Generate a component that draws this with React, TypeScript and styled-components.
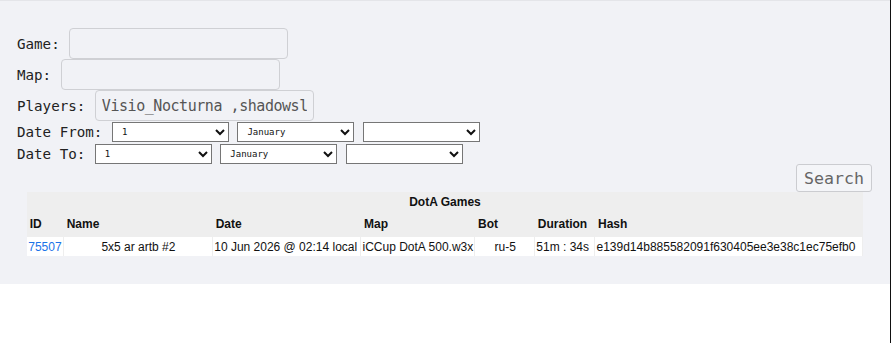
import React from "react";
import styled, { createGlobalStyle } from "styled-components";

const Global = createGlobalStyle`
  html, body { margin: 0; padding: 0; background: #ffffff; }
  * { box-sizing: border-box; }
`;

const Page = styled.div`
  width: 891px;
  min-height: 100vh;
  border-right: 1px solid #111;
`;

const Panel = styled.section`
  background: #f1f2f6;
  border-top: 1px solid #e4e5e9;
  padding: 27px 0 28px;
`;

const Form = styled.form`
  display: flex;
  flex-direction: column;
  padding-left: 17px;
`;

const Row = styled.div<{ $h: number }>`
  display: flex;
  align-items: center;
  gap: 9.5px;
  height: ${(p) => p.$h}px;
`;

const Label = styled.label`
  font-family: "DejaVu Sans Mono", monospace;
  font-size: 14.2px;
  color: #222;
  white-space: pre;
`;

const TextInput = styled.input`
  width: 219px;
  height: 31px;
  border: 1px solid #cfd0d4;
  border-radius: 4px;
  background: transparent;
  padding: 0 6px;
  font-family: "DejaVu Sans Mono", monospace;
  font-size: 15px;
  letter-spacing: -0.45px;
  color: #555;
  outline: none;
`;

const Selects = styled.div`
  display: flex;
  gap: 8.5px;
`;

const Select = styled.select`
  width: 117px;
  height: 20px;
  background-color: #fff;
  font-family: "DejaVu Sans Mono", monospace;
  font-size: 9px;
  color: #111;
  padding-left: 5px;
`;

const SearchRow = styled.div`
  display: flex;
  justify-content: flex-end;
  padding-right: 18px;
  margin-top: -1px;
`;

const SearchButton = styled.button`
  width: 76px;
  height: 28px;
  border: 1px solid #cbccd0;
  border-radius: 3px;
  background: #f4f5f8;
  font-family: "DejaVu Sans Mono", monospace;
  font-size: 16.6px;
  color: #666;
  padding: 0;
`;

const Table = styled.table`
  width: 94%;
  margin: 0 auto;
  table-layout: fixed;
  border-collapse: separate;
  border-spacing: 0;
  background: #eeeeee;
  font-family: "Liberation Sans", Arial, sans-serif;
  font-size: 12px;
  color: #111;
`;

const CaptionCell = styled.th`
  height: 19px;
  text-align: center;
  font-weight: bold;
  padding: 0;
`;

const HeadCell = styled.th`
  height: 26px;
  text-align: left;
  font-weight: bold;
  padding: 0 0 0 3px;
  white-space: nowrap;
  overflow: hidden;
`;

const Cell = styled.td<{ $center?: boolean }>`
  height: 19px;
  background: #fff;
  background-clip: padding-box;
  border-right: 1.5px solid #eeeeee;
  padding: 0 0 0 1.5px;
  text-align: ${(p) => (p.$center ? "center" : "left")};
  white-space: nowrap;
  overflow: hidden;
  &:last-child { border-right-width: 1px; }
`;

const Link = styled.a`
  color: #1a73e8;
  text-decoration: none;
`;

const days = Array.from({ length: 31 }, (_, i) => String(i + 1));
const months = [
  "January", "February", "March", "April", "May", "June",
  "July", "August", "September", "October", "November", "December",
];

const DateSelects: React.FC = () => (
  <Selects>
    <Select defaultValue="1">
      {days.map((d) => (
        <option key={d}>{d}</option>
      ))}
    </Select>
    <Select defaultValue="January">
      {months.map((m) => (
        <option key={m}>{m}</option>
      ))}
    </Select>
    <Select defaultValue="">
      <option value=""></option>
      <option>2026</option>
      <option>2025</option>
    </Select>
  </Selects>
);

const cols = [37, 149, 148.3, 114, 59.8, 60.2];

export default function App() {
  return (
    <Page>
      <Global />
      <Panel>
        <Form onSubmit={(e) => e.preventDefault()}>
          <Row $h={31}>
            <Label>Game:</Label>
            <TextInput />
          </Row>
          <Row $h={31}>
            <Label>Map:</Label>
            <TextInput />
          </Row>
          <Row $h={31}>
            <Label>Players:</Label>
            <TextInput defaultValue="Visio_Nocturna ,shadowslayer" />
          </Row>
          <Row $h={22}>
            <Label>Date From:</Label>
            <DateSelects />
          </Row>
          <Row $h={22}>
            <Label>Date To:</Label>
            <DateSelects />
          </Row>
        </Form>
        <SearchRow>
          <SearchButton type="button">Search</SearchButton>
        </SearchRow>
        <Table>
          <colgroup>
            {cols.map((w, i) => (
              <col key={i} style={{ width: w }} />
            ))}
            <col />
          </colgroup>
          <thead>
            <tr>
              <CaptionCell colSpan={7}>DotA Games</CaptionCell>
            </tr>
            <tr>
              <HeadCell>ID</HeadCell>
              <HeadCell>Name</HeadCell>
              <HeadCell>Date</HeadCell>
              <HeadCell>Map</HeadCell>
              <HeadCell>Bot</HeadCell>
              <HeadCell>Duration</HeadCell>
              <HeadCell>Hash</HeadCell>
            </tr>
          </thead>
          <tbody>
            <tr>
              <Cell>
                <Link href="#">75507</Link>
              </Cell>
              <Cell $center>5x5 ar artb #2</Cell>
              <Cell>10 Jun 2026 @ 02:14 local</Cell>
              <Cell>iCCup DotA 500.w3x</Cell>
              <Cell $center>ru-5</Cell>
              <Cell>51m : 34s</Cell>
              <Cell>e139d14b885582091f630405ee3e38c1ec75efb0</Cell>
            </tr>
          </tbody>
        </Table>
      </Panel>
    </Page>
  );
}
